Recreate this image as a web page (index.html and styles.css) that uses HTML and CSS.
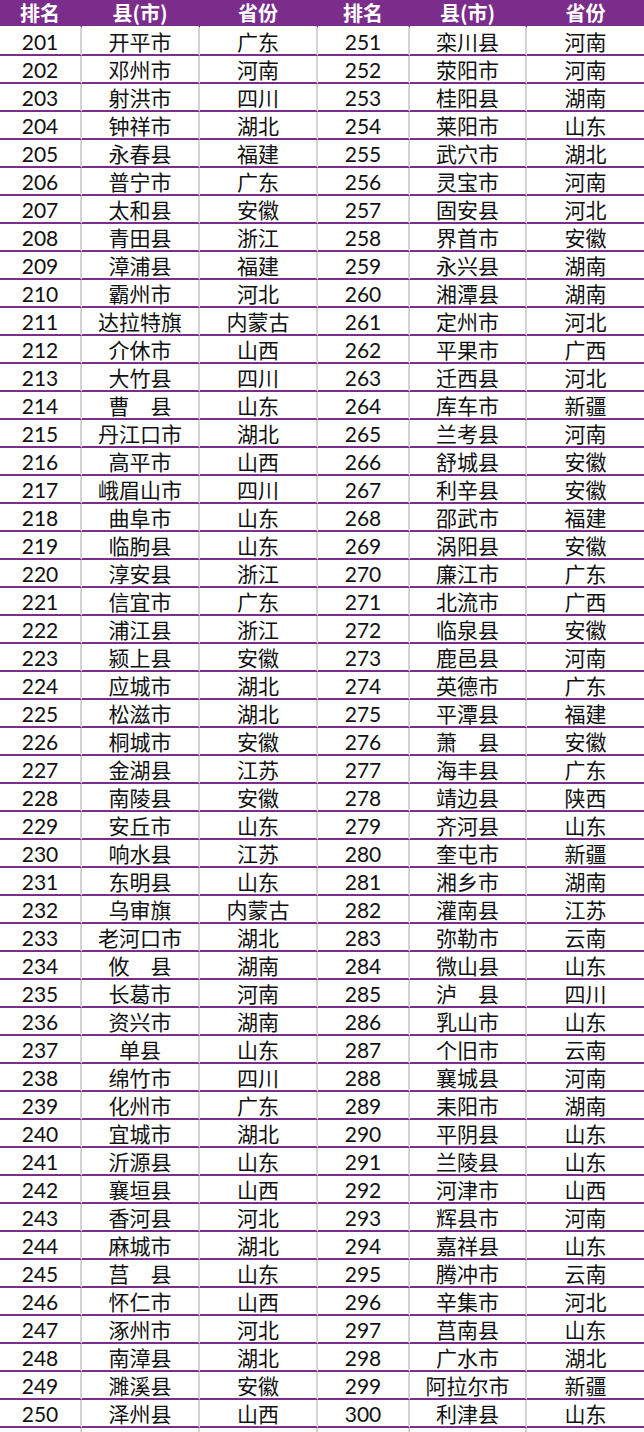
FILE: index.html
```html
<!DOCTYPE html>
<html lang="zh">
<head>
<meta charset="utf-8">
<title>县市排名 201-300</title>
<link rel="stylesheet" href="styles.css">
</head>
<body>
<div class="sheet">
<div class="h">排名</div><div class="h">县(市)</div><div class="h">省份</div><div class="h">排名</div><div class="h">县(市)</div><div class="h last">省份</div>
<div class="n">201</div><div class="c">开平市</div><div class="c">广东</div><div class="n">251</div><div class="c">栾川县</div><div class="c last">河南</div>
<div class="n">202</div><div class="c">邓州市</div><div class="c">河南</div><div class="n">252</div><div class="c">荥阳市</div><div class="c last">河南</div>
<div class="n">203</div><div class="c">射洪市</div><div class="c">四川</div><div class="n">253</div><div class="c">桂阳县</div><div class="c last">湖南</div>
<div class="n">204</div><div class="c">钟祥市</div><div class="c">湖北</div><div class="n">254</div><div class="c">莱阳市</div><div class="c last">山东</div>
<div class="n">205</div><div class="c">永春县</div><div class="c">福建</div><div class="n">255</div><div class="c">武穴市</div><div class="c last">湖北</div>
<div class="n">206</div><div class="c">普宁市</div><div class="c">广东</div><div class="n">256</div><div class="c">灵宝市</div><div class="c last">河南</div>
<div class="n">207</div><div class="c">太和县</div><div class="c">安徽</div><div class="n">257</div><div class="c">固安县</div><div class="c last">河北</div>
<div class="n">208</div><div class="c">青田县</div><div class="c">浙江</div><div class="n">258</div><div class="c">界首市</div><div class="c last">安徽</div>
<div class="n">209</div><div class="c">漳浦县</div><div class="c">福建</div><div class="n">259</div><div class="c">永兴县</div><div class="c last">湖南</div>
<div class="n">210</div><div class="c">霸州市</div><div class="c">河北</div><div class="n">260</div><div class="c">湘潭县</div><div class="c last">湖南</div>
<div class="n">211</div><div class="c">达拉特旗</div><div class="c">内蒙古</div><div class="n">261</div><div class="c">定州市</div><div class="c last">河北</div>
<div class="n">212</div><div class="c">介休市</div><div class="c">山西</div><div class="n">262</div><div class="c">平果市</div><div class="c last">广西</div>
<div class="n">213</div><div class="c">大竹县</div><div class="c">四川</div><div class="n">263</div><div class="c">迁西县</div><div class="c last">河北</div>
<div class="n">214</div><div class="c">曹　县</div><div class="c">山东</div><div class="n">264</div><div class="c">库车市</div><div class="c last">新疆</div>
<div class="n">215</div><div class="c">丹江口市</div><div class="c">湖北</div><div class="n">265</div><div class="c">兰考县</div><div class="c last">河南</div>
<div class="n">216</div><div class="c">高平市</div><div class="c">山西</div><div class="n">266</div><div class="c">舒城县</div><div class="c last">安徽</div>
<div class="n">217</div><div class="c">峨眉山市</div><div class="c">四川</div><div class="n">267</div><div class="c">利辛县</div><div class="c last">安徽</div>
<div class="n">218</div><div class="c">曲阜市</div><div class="c">山东</div><div class="n">268</div><div class="c">邵武市</div><div class="c last">福建</div>
<div class="n">219</div><div class="c">临朐县</div><div class="c">山东</div><div class="n">269</div><div class="c">涡阳县</div><div class="c last">安徽</div>
<div class="n">220</div><div class="c">淳安县</div><div class="c">浙江</div><div class="n">270</div><div class="c">廉江市</div><div class="c last">广东</div>
<div class="n">221</div><div class="c">信宜市</div><div class="c">广东</div><div class="n">271</div><div class="c">北流市</div><div class="c last">广西</div>
<div class="n">222</div><div class="c">浦江县</div><div class="c">浙江</div><div class="n">272</div><div class="c">临泉县</div><div class="c last">安徽</div>
<div class="n">223</div><div class="c">颍上县</div><div class="c">安徽</div><div class="n">273</div><div class="c">鹿邑县</div><div class="c last">河南</div>
<div class="n">224</div><div class="c">应城市</div><div class="c">湖北</div><div class="n">274</div><div class="c">英德市</div><div class="c last">广东</div>
<div class="n">225</div><div class="c">松滋市</div><div class="c">湖北</div><div class="n">275</div><div class="c">平潭县</div><div class="c last">福建</div>
<div class="n">226</div><div class="c">桐城市</div><div class="c">安徽</div><div class="n">276</div><div class="c">萧　县</div><div class="c last">安徽</div>
<div class="n">227</div><div class="c">金湖县</div><div class="c">江苏</div><div class="n">277</div><div class="c">海丰县</div><div class="c last">广东</div>
<div class="n">228</div><div class="c">南陵县</div><div class="c">安徽</div><div class="n">278</div><div class="c">靖边县</div><div class="c last">陕西</div>
<div class="n">229</div><div class="c">安丘市</div><div class="c">山东</div><div class="n">279</div><div class="c">齐河县</div><div class="c last">山东</div>
<div class="n">230</div><div class="c">响水县</div><div class="c">江苏</div><div class="n">280</div><div class="c">奎屯市</div><div class="c last">新疆</div>
<div class="n">231</div><div class="c">东明县</div><div class="c">山东</div><div class="n">281</div><div class="c">湘乡市</div><div class="c last">湖南</div>
<div class="n">232</div><div class="c">乌审旗</div><div class="c">内蒙古</div><div class="n">282</div><div class="c">灌南县</div><div class="c last">江苏</div>
<div class="n">233</div><div class="c">老河口市</div><div class="c">湖北</div><div class="n">283</div><div class="c">弥勒市</div><div class="c last">云南</div>
<div class="n">234</div><div class="c">攸　县</div><div class="c">湖南</div><div class="n">284</div><div class="c">微山县</div><div class="c last">山东</div>
<div class="n">235</div><div class="c">长葛市</div><div class="c">河南</div><div class="n">285</div><div class="c">泸　县</div><div class="c last">四川</div>
<div class="n">236</div><div class="c">资兴市</div><div class="c">湖南</div><div class="n">286</div><div class="c">乳山市</div><div class="c last">山东</div>
<div class="n">237</div><div class="c">单县</div><div class="c">山东</div><div class="n">287</div><div class="c">个旧市</div><div class="c last">云南</div>
<div class="n">238</div><div class="c">绵竹市</div><div class="c">四川</div><div class="n">288</div><div class="c">襄城县</div><div class="c last">河南</div>
<div class="n">239</div><div class="c">化州市</div><div class="c">广东</div><div class="n">289</div><div class="c">耒阳市</div><div class="c last">湖南</div>
<div class="n">240</div><div class="c">宜城市</div><div class="c">湖北</div><div class="n">290</div><div class="c">平阴县</div><div class="c last">山东</div>
<div class="n">241</div><div class="c">沂源县</div><div class="c">山东</div><div class="n">291</div><div class="c">兰陵县</div><div class="c last">山东</div>
<div class="n">242</div><div class="c">襄垣县</div><div class="c">山西</div><div class="n">292</div><div class="c">河津市</div><div class="c last">山西</div>
<div class="n">243</div><div class="c">香河县</div><div class="c">河北</div><div class="n">293</div><div class="c">辉县市</div><div class="c last">河南</div>
<div class="n">244</div><div class="c">麻城市</div><div class="c">湖北</div><div class="n">294</div><div class="c">嘉祥县</div><div class="c last">山东</div>
<div class="n">245</div><div class="c">莒　县</div><div class="c">山东</div><div class="n">295</div><div class="c">腾冲市</div><div class="c last">云南</div>
<div class="n">246</div><div class="c">怀仁市</div><div class="c">山西</div><div class="n">296</div><div class="c">辛集市</div><div class="c last">河北</div>
<div class="n">247</div><div class="c">涿州市</div><div class="c">河北</div><div class="n">297</div><div class="c">莒南县</div><div class="c last">山东</div>
<div class="n">248</div><div class="c">南漳县</div><div class="c">湖北</div><div class="n">298</div><div class="c">广水市</div><div class="c last">湖北</div>
<div class="n">249</div><div class="c">濉溪县</div><div class="c">安徽</div><div class="n">299</div><div class="c">阿拉尔市</div><div class="c last">新疆</div>
<div class="n">250</div><div class="c">泽州县</div><div class="c">山西</div><div class="n">300</div><div class="c">利津县</div><div class="c last">山东</div>
<div class="n"></div><div class="c"></div><div class="c"></div><div class="n"></div><div class="c"></div><div class="c last"></div>
</div>
</body>
</html>
```
FILE: styles.css
```css
html, body {
  margin: 0;
  padding: 0;
  background: #ffffff;
}
body {
  width: 644px;
  height: 1432px;
  overflow: hidden;
}
.sheet {
  display: grid;
  grid-template-columns: 82px 118px 118px 92px 117px 117px;
  grid-auto-rows: 28px;
  font-family: "Noto Sans CJK SC", "Noto Sans", sans-serif;
  color: #111111;
}
.sheet > div {
  box-sizing: border-box;
  display: flex;
  align-items: center;
  justify-content: center;
  white-space: nowrap;
  border-right: 2px solid #d3d3d3;
  border-bottom: 2px solid #7b2d8b;
  font-size: 21px;
  line-height: 1;
}
.sheet > div.last {
  border-right: none;
}
.sheet > .h {
  background: #7b2d8b;
  color: #ffffff;
  font-weight: 700;
  font-size: 20px;
  border-right-color: #7b2d8b;
  border-bottom: 2px solid #ffffff;
  padding-bottom: 1px;
}
.sheet > .n {
  font-family: "Lato", "Open Sans", sans-serif;
  font-size: 21px;
}
```
